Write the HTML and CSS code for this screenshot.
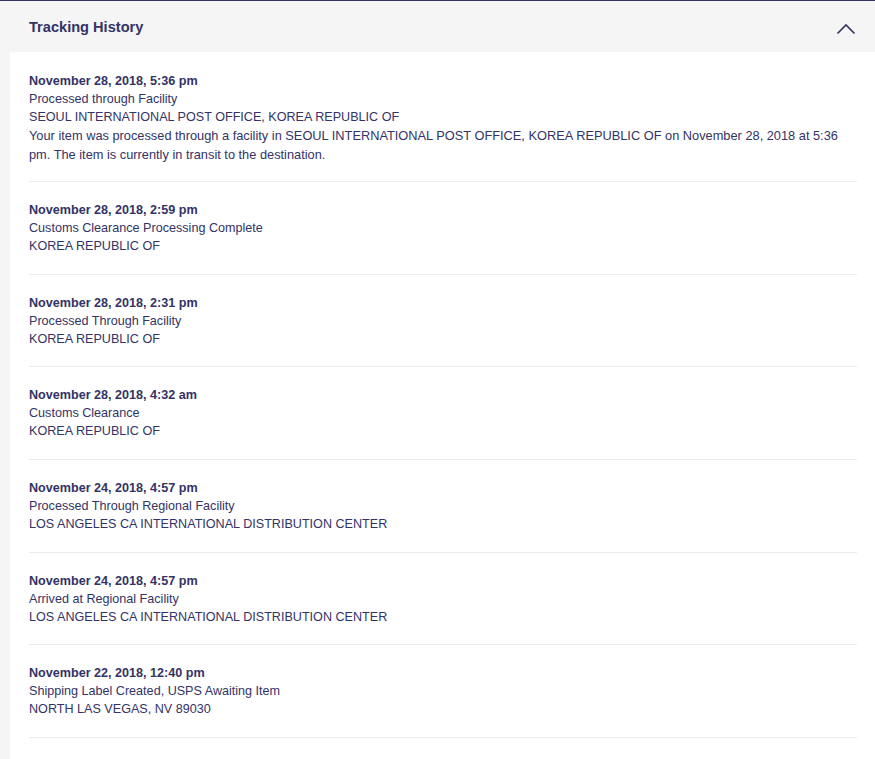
FILE: index.html
```html
<!DOCTYPE html>
<html lang="en">
<head>
  <meta charset="UTF-8" />
  <meta name="viewport" content="width=device-width, initial-scale=1.0"/>
  <title>Tracking History</title>
  <link rel="stylesheet" href="styles.css">
</head>
<body>
  <div class="tracking-panel">
    <div class="history-header">
      <h2>Tracking History</h2>
      <svg class="chevron" width="20" height="12" viewBox="0 0 20 12">
        <path d="M1.5 10.5 L10 2 L18.5 10.5" fill="none" stroke="#333366" stroke-width="1.6"/>
      </svg>
    </div>

    <div class="history-body">
      <div class="event">
        <div class="event-date">November 28, 2018, 5:36 pm</div>
        <div>Processed through Facility</div>
        <div>SEOUL INTERNATIONAL POST OFFICE, KOREA REPUBLIC OF</div>
        <div class="event-note">Your item was processed through a facility in SEOUL INTERNATIONAL POST OFFICE, KOREA REPUBLIC OF on November 28, 2018 at 5:36 pm. The item is currently in transit to the destination.</div>
      </div>
      <div class="event">
        <div class="event-date">November 28, 2018, 2:59 pm</div>
        <div>Customs Clearance Processing Complete</div>
        <div>KOREA REPUBLIC OF</div>
      </div>
      <div class="event">
        <div class="event-date">November 28, 2018, 2:31 pm</div>
        <div>Processed Through Facility</div>
        <div>KOREA REPUBLIC OF</div>
      </div>
      <div class="event">
        <div class="event-date">November 28, 2018, 4:32 am</div>
        <div>Customs Clearance</div>
        <div>KOREA REPUBLIC OF</div>
      </div>
      <div class="event">
        <div class="event-date">November 24, 2018, 4:57 pm</div>
        <div>Processed Through Regional Facility</div>
        <div>LOS ANGELES CA INTERNATIONAL DISTRIBUTION CENTER</div>
      </div>
      <div class="event">
        <div class="event-date">November 24, 2018, 4:57 pm</div>
        <div>Arrived at Regional Facility</div>
        <div>LOS ANGELES CA INTERNATIONAL DISTRIBUTION CENTER</div>
      </div>
      <div class="event">
        <div class="event-date">November 22, 2018, 12:40 pm</div>
        <div>Shipping Label Created, USPS Awaiting Item</div>
        <div>NORTH LAS VEGAS, NV 89030</div>
      </div>
      <div class="spacer"></div>
    </div>
  </div>
</body>
</html>
```

FILE: styles.css
```css
body {
  margin: 0;
  font-family: "Liberation Sans", Arial, sans-serif;
  background-color: #f5f5f5;
  color: #333366;
  border-top: 1px solid #333366;
}
.history-header {
  display: flex;
  justify-content: space-between;
  align-items: center;
  height: 51px;
  padding: 0 19px 0 29px;
}
.history-header h2 {
  margin: 0;
  font-size: 14.6px;
  font-weight: bold;
  color: #333366;
}
.chevron {
  display: block;
  margin-top: 4px;
}
.history-body {
  margin-left: 10px;
  background: #fff;
  padding: 0 18px 0 19px;
}
.event {
  padding: 19px 0 18.7px;
  border-bottom: 1px solid #ebebeb;
  font-size: 12.6px;
  line-height: 18px;
}
.event:first-child {
  padding-top: 20px;
  padding-bottom: 17px;
}
.event-date {
  font-weight: bold;
}
.event-note {
  font-size: 12.8px;
  line-height: 19px;
}
.spacer {
  height: 40px;
}
```
